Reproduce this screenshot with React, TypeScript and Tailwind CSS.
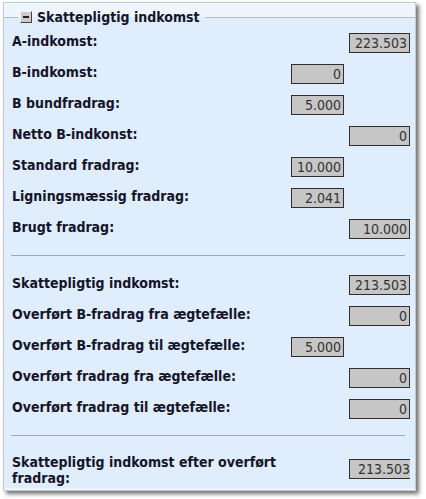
import React from 'react';

interface RowItem {
    label: string;
    value: string;
    wide: boolean;
}

const firstRows: RowItem[] = [
    { label: 'A-indkomst:', value: '223.503', wide: true },
    { label: 'B-indkomst:', value: '0', wide: false },
    { label: 'B bundfradrag:', value: '5.000', wide: false },
    { label: 'Netto B-indkonst:', value: '0', wide: true },
    { label: 'Standard fradrag:', value: '10.000', wide: false },
    { label: 'Ligningsmæssig fradrag:', value: '2.041', wide: false },
    { label: 'Brugt fradrag:', value: '10.000', wide: true },
];

const secondRows: RowItem[] = [
    { label: 'Skattepligtig indkomst:', value: '213.503', wide: true },
    { label: 'Overført B-fradrag fra ægtefælle:', value: '0', wide: true },
    { label: 'Overført B-fradrag til ægtefælle:', value: '5.000', wide: false },
    { label: 'Overført fradrag fra ægtefælle:', value: '0', wide: true },
    { label: 'Overført fradrag til ægtefælle:', value: '0', wide: true },
];

const font = "font-['DejaVu_Sans_Condensed','DejaVu_Sans',Tahoma,sans-serif]";

const ValueBox: React.FC<{ value: string; clipped?: boolean }> = ({ value, clipped }) => (
    <div
        className={`h-[20px] overflow-hidden whitespace-nowrap border border-[#2e2e2e] bg-[#c6c6c6] text-right text-[14px] leading-[18px] text-[#333] ${clipped ? 'border-r-0 pr-0' : 'pr-[2px]'}`}
    >
        {value}
    </div>
);

const Row: React.FC<{ item: RowItem }> = ({ item }) => (
    <div className="flex h-[31px] items-center">
        <span className="flex-1 pb-[4px] text-[14px] font-bold leading-[16px] text-[#14142a]">{item.label}</span>
        <div className="w-[53px]">{!item.wide && <ValueBox value={item.value} />}</div>
        <div className="ml-[5px] w-[61px]">{item.wide && <ValueBox value={item.value} />}</div>
    </div>
);

const Divider: React.FC<{ bottom: string }> = ({ bottom }) => (
    <div className={`ml-[-1px] mr-[5px] mt-[11px] h-px bg-[#a3a9b0] ${bottom}`} />
);

const App: React.FC = () => {
    return (
        <div className={`h-[499px] w-[426px] bg-white ${font}`}>
            <div className="ml-[3px] mt-[2px] h-[489px] w-[413px] border border-[#c2cad3] bg-[#eef5fd] shadow-[3px_3px_4px_rgba(0,0,0,0.55)]">
                <fieldset className="mt-[6px] h-[479px] border-t border-[#b4bec9] bg-[#dfedfc]">
                    <legend className="ml-[14px] px-[2px]">
                        <div className="flex h-[16px] items-center">
                            {/* collapse toggle */}
                            <div className="flex h-[12px] w-[12px] items-center justify-center border border-b-[#404040] border-l-[#f4f4f4] border-r-[#404040] border-t-[#f4f4f4] bg-[#cfccc7]">
                                <div className="h-[2px] w-[6px] bg-[#222]" />
                            </div>
                            <span className="ml-[5px] pr-[3px] text-[14px] font-bold leading-[16px] text-[#14142a]">Skattepligtig indkomst</span>
                        </div>
                    </legend>
                    <div className="pl-[8px] pr-[5px] pt-[2px]">
                        {firstRows.map((item, i) => (
                            <Row key={i} item={item} />
                        ))}
                        <Divider bottom="mb-[13px]" />
                        {secondRows.map((item, i) => (
                            <Row key={i} item={item} />
                        ))}
                        <Divider bottom="mb-[18px]" />
                        <div className="flex items-start">
                            <span className="flex-1 text-[14px] font-bold leading-[16px] text-[#14142a]">
                                Skattepligtig indkomst efter overført fradrag:
                            </span>
                            <div className="w-[53px]" />
                            <div className="ml-[5px] mt-[5px] w-[61px]">
                                <ValueBox value="213.503" clipped />
                            </div>
                        </div>
                    </div>
                </fieldset>
            </div>
        </div>
    );
};

export default App;
